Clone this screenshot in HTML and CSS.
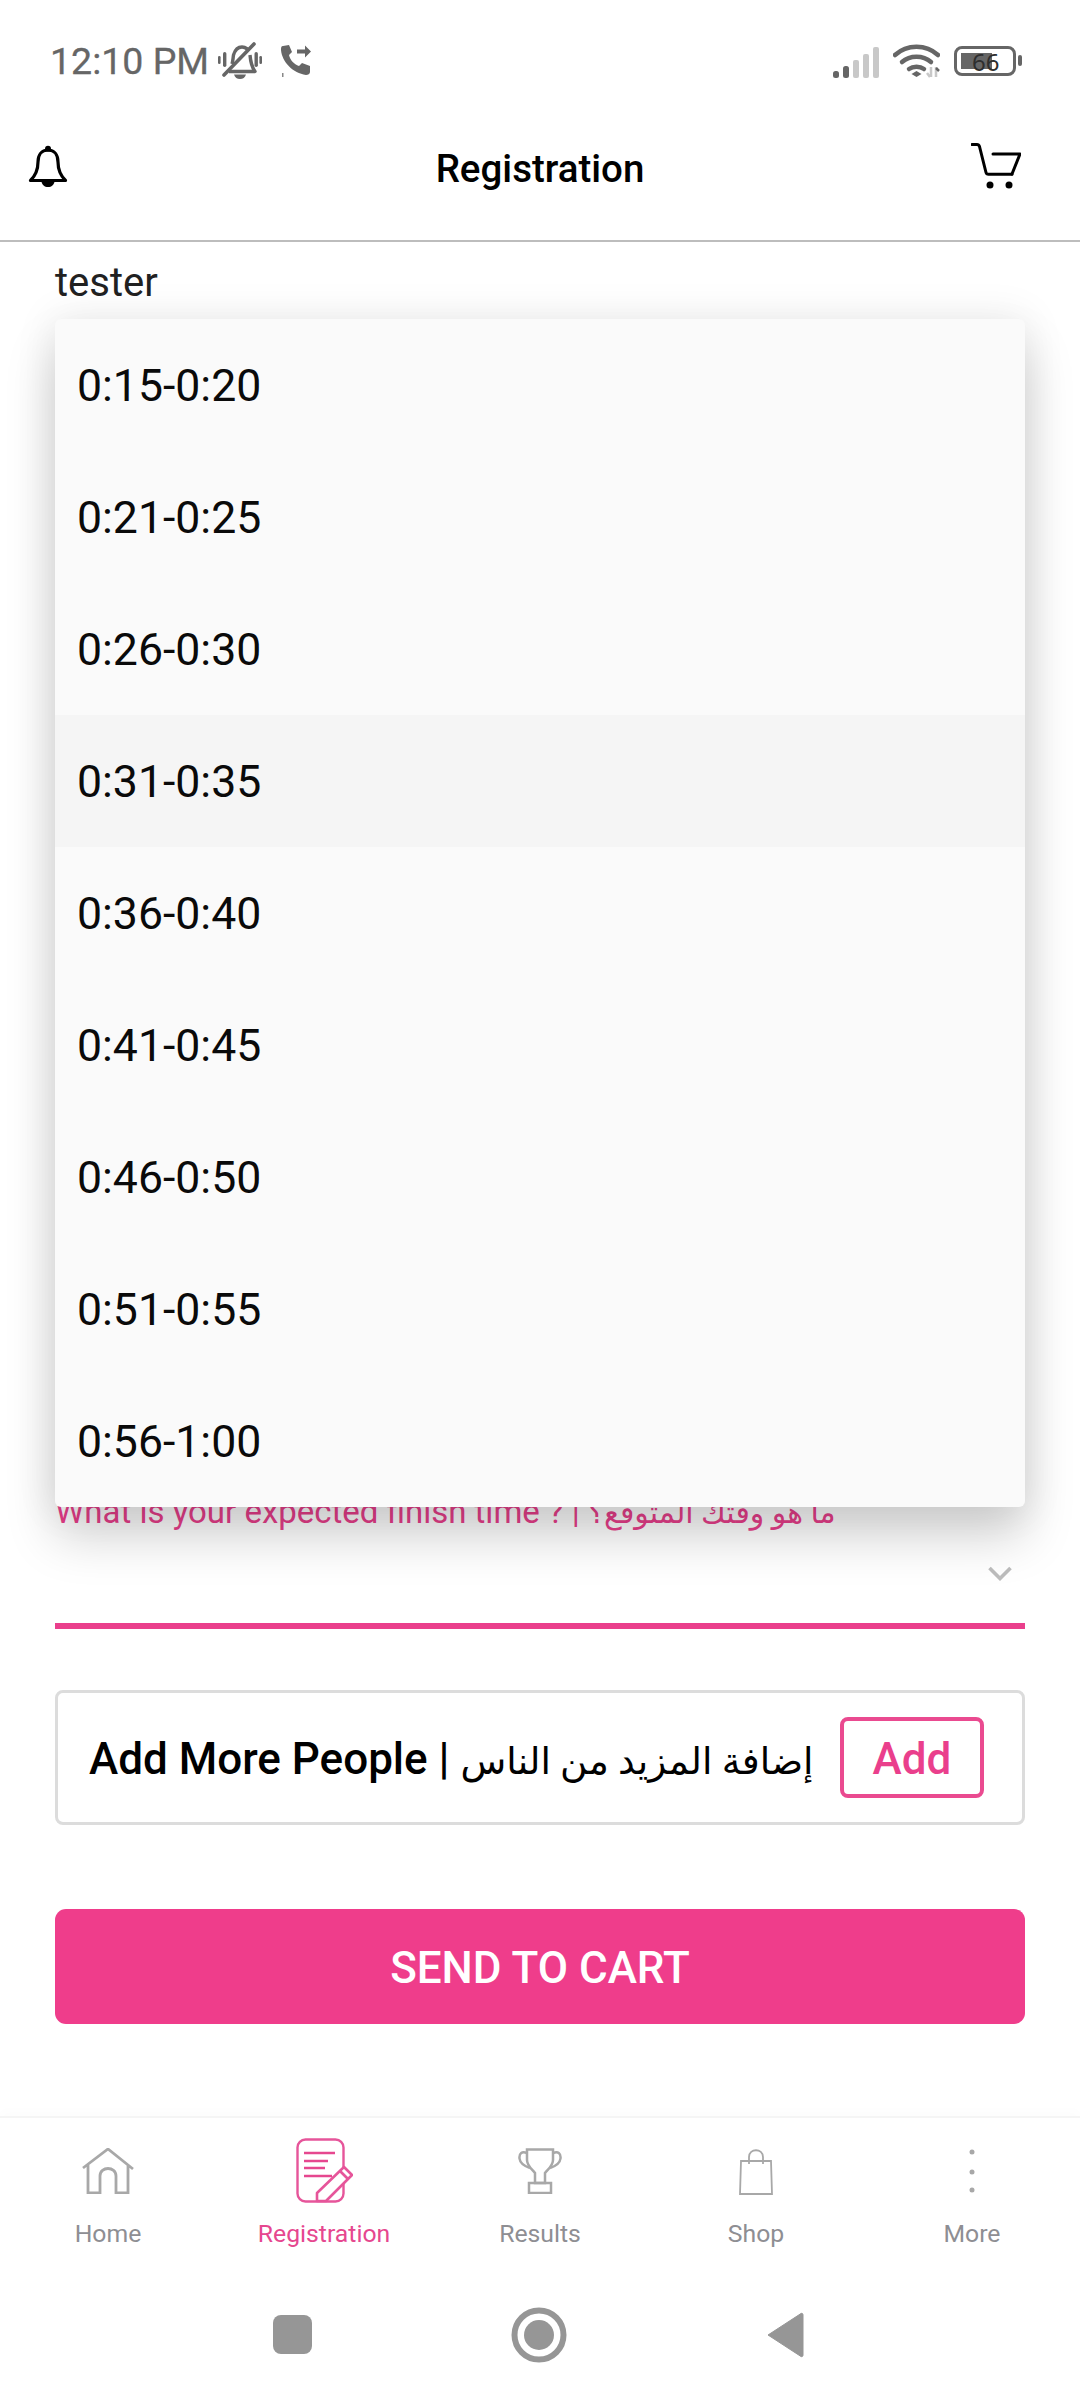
FILE: index.html
```html
<!DOCTYPE html>
<html lang="en">
<head>
<meta charset="utf-8">
<title>Registration</title>
<link rel="stylesheet" href="styles.css">
</head>
<body>
<div class="phone">
  <div class="status">
    <div class="status-left">
      <span class="clock">12:10 PM</span>
      <svg class="ic-mute" viewBox="0 0 44 37"><g fill="none" stroke="#666" stroke-width="3.400" stroke-linejoin="round"><path d="M14 22c1-3 1-6 1.500-9C17 8 20 5 24 5c2 0 4 1 5.500 2"/><path d="M32 13c.5 6 1 11 5 16.500H11"/></g><g fill="#666"><path d="M16 32.500h12c-1 3-3 4.500-6 4.500s-5-1.500-6-4.500z"/><rect x="0" y="14" width="2.600" height="8" rx="1.200"/><rect x="5" y="10" width="3.400" height="15" rx="1.700"/><rect x="36.500" y="10" width="3.400" height="15" rx="1.700"/><rect x="41.400" y="14" width="2.600" height="8" rx="1.200"/></g><path d="M6 33L36 2" stroke="#666" stroke-width="3.600" stroke-linecap="round" fill="none"/></svg>
      <svg class="ic-call" viewBox="0 0 30 32"><path d="M2 1l6-1 3 7-3 3c1 5 5 9 10 11l3-3 8 3v6c0 2-2 3-4 3C12 28 1 17 0 5c0-2 0-4 2-4z" fill="#666"/><path d="M16 8h8V4l6 6-6 6v-4h-8z" transform="translate(0 -3.500)" fill="#666"/><rect x="1" y="28" width="1.500" height="4" fill="#888"/></svg>
    </div>
    <div class="status-right">
      <svg class="ic-signal" viewBox="0 0 46 31"><rect x="0" y="24" width="6" height="7" rx="2.500" fill="#666"/><rect x="10" y="19" width="6" height="12" rx="2.500" fill="#666"/><rect x="20" y="13" width="6" height="18" rx="2" fill="#c8c8c8"/><rect x="30" y="7" width="6" height="24" rx="2" fill="#c8c8c8"/><rect x="40" y="0" width="6" height="31" rx="2" fill="#c8c8c8"/></svg>
      <svg class="ic-wifi" viewBox="0 0 47 35"><g fill="none" stroke="#666" stroke-width="4.500" stroke-linecap="round"><path d="M2 12C14 1 33 1 45 12"/><path d="M9 19c8-7 21-7 29 0"/><path d="M16 26c4-3 11-3 15 0"/></g><path d="M23.500 28l-5 3 5 3 5-3z" fill="#666"/><path d="M38 24v10M34 30l3 4M43 24v10" stroke="#c8c8c8" stroke-width="2.500" fill="none"/><path d="M43 25l3 3" stroke="#666" stroke-width="2.500" fill="none"/></svg>
      <div class="battery">
        <div class="battery-body"><div class="battery-fill"></div><span class="battery-num">66</span></div>
        <div class="battery-nub"></div>
      </div>
    </div>
  </div>

  <header class="appbar">
    <svg class="ic-bell" viewBox="0 0 40 42"><path d="M20 5c-6.500 0-10 5-10 12 0 8-2 13-7.500 18.500h35C32 30 30 25 30 17c0-7-3.500-12-10-12z" fill="none" stroke="#000" stroke-width="3.200" stroke-linejoin="round"/><circle cx="20" cy="3.800" r="3" fill="#000"/><path d="M13.500 36.500h13C26 40 23.500 42 20 42s-6-2-6.500-5.500z" fill="#000"/></svg>
    <h1 class="title">Registration</h1>
    <svg class="ic-cart" viewBox="0 0 50 46"><g fill="none" stroke="#000" stroke-width="3" stroke-linecap="round" stroke-linejoin="round"><path d="M1 1.500h5c1.500 0 2 .5 2.500 2L15 29.500c.3 1.200 1 1.800 2.500 1.800H41"/><path d="M22 11h27l-8 20"/></g><circle cx="19" cy="42" r="3.500"/><circle cx="38" cy="42" r="3.500"/></svg>
  </header>

  <main class="form">
    <div class="name">tester</div>
    <div class="menu-wrap">
      <ul class="menu">
        <li class="menu-item">0:15-0:20</li>
        <li class="menu-item">0:21-0:25</li>
        <li class="menu-item">0:26-0:30</li>
        <li class="menu-item is-active">0:31-0:35</li>
        <li class="menu-item">0:36-0:40</li>
        <li class="menu-item">0:41-0:45</li>
        <li class="menu-item">0:46-0:50</li>
        <li class="menu-item">0:51-0:55</li>
        <li class="menu-item">0:56-1:00</li>
      </ul>
    </div>
    <div class="field">
      <div class="field-label">What is your expected finish time ? | <span class="ar field-ar" dir="rtl">ما هو وقتك المتوقع؟</span></div>
      <svg class="ic-chevron" viewBox="0 0 24 15"><path d="M1.500 2L12 12.500 22.500 2" fill="none" stroke="#bdbdbd" stroke-width="3.600"/></svg>
    </div>
    <div class="add-card">
      <div class="add-text">Add More People | <span class="ar add-ar" dir="rtl">إضافة المزيد من الناس</span></div>
      <button class="add-btn">Add</button>
    </div>
    <button class="send-btn">SEND TO CART</button>
  </main>

  <nav class="tabs">
    <div class="tab">
      <svg class="tab-ic ic-home" viewBox="0 0 52 46"><path d="M1 20L26 1l25 20M6 17v28h12V28c0-10 16-10 16 0v17h12V17" fill="none" stroke="#a8a8a8" stroke-width="2.800"/></svg>
      <span class="tab-label">Home</span>
    </div>
    <div class="tab is-current">
      <svg class="tab-ic ic-doc" viewBox="0 0 57 65"><rect x="1.500" y="1.500" width="46" height="62" rx="8" fill="none" stroke="#e6559a" stroke-width="2.400"/><path d="M8 15h31M8 23h24M8 30h21M8 38h28" stroke="#e6478f" stroke-width="2.600"/><path d="M21 55L48 29l8 8-26 26h-9z" fill="#fff" stroke="#e6559a" stroke-width="2.600" stroke-linejoin="round"/><path d="M44 33l8 8" stroke="#e6559a" stroke-width="2.600"/></svg>
      <span class="tab-label">Registration</span>
    </div>
    <div class="tab">
      <svg class="tab-ic ic-trophy" viewBox="0 0 44 46"><g fill="none" stroke="#a8a8a8" stroke-width="2.500"><path d="M9 1.500H35V12C35 18 30 21 27 25V35H17V25C14 21 9 18 9 12Z"/><path d="M9 5C4 3 1 5 1.500 10.500 2 15 6 18 12 20"/><path d="M35 5c5-2 8 0 7.500 5.500C42 15 38 18 32 20"/><rect x="11" y="35" width="22" height="10"/></g></svg>
      <span class="tab-label">Results</span>
    </div>
    <div class="tab">
      <svg class="tab-ic ic-bag" viewBox="0 0 34 46"><g fill="none" stroke="#a8a8a8" stroke-width="1.800"><path d="M2 12h30l1 33H1z"/><path d="M10 15V8c0-9 14-9 14 0v7"/></g></svg>
      <span class="tab-label">Shop</span>
    </div>
    <div class="tab">
      <svg class="tab-ic ic-more" viewBox="0 0 6 46"><circle cx="3" cy="3" r="2.500" fill="#a8a8a8"/><circle cx="3" cy="23" r="2.500" fill="#a8a8a8"/><circle cx="3" cy="41" r="2.500" fill="#a8a8a8"/></svg>
      <span class="tab-label">More</span>
    </div>
  </nav>

  <div class="sysnav">
    <div class="sys-square"></div>
    <svg class="sys-home" viewBox="0 0 56 56"><circle cx="28" cy="28" r="24.500" fill="none" stroke="#969696" stroke-width="6"/><circle cx="28" cy="28" r="15" fill="#969696"/></svg>
    <svg class="sys-back" viewBox="0 0 38 46"><path d="M2 23L35 1.500c1-.5 2 0 2 1.500v40c0 1.500-1 2-2 1.500z" fill="#969696" stroke="#969696" stroke-linejoin="round"/></svg>
  </div>
</div>
</body>
</html>
```
FILE: styles.css
```css
* { box-sizing: border-box; }
html, body { margin: 0; padding: 0; background: #fff; }
body { font-family: Roboto, "DejaVu Sans", sans-serif; color: #000; }
.phone { width: 1080px; height: 2400px; overflow: hidden; display: flex; flex-direction: column; background: #fff; }

.status { height: 76px; padding: 42px 58px 0 50px; display: flex; justify-content: space-between; align-items: flex-start; }
.status-left, .status-right { display: flex; align-items: center; height: 37px; }
.clock { font-size: 37.500px; color: #666; line-height: 37px; padding-top: 2px; -webkit-text-stroke: .3px #666; }
.ic-mute { width: 44px; height: 37px; margin-left: 9px; }
.ic-call { width: 30px; height: 32px; margin-left: 19px; }
.ic-signal { width: 46px; height: 31px; margin-right: 14px; margin-top: 4px; }
.ic-wifi { width: 47px; height: 35px; margin-right: 14px; }
.battery { display: flex; align-items: center; }
.battery-body { position: relative; width: 62px; height: 30px; border: 3px solid #666; border-radius: 8px; }
.battery-fill { position: absolute; left: 4px; top: 4px; bottom: 4px; width: 31px; background: #666; }
.battery-num { position: absolute; left: 15px; top: 0; font-size: 24px; line-height: 25px; color: #2e2e2e; font-family: "Noto Sans", sans-serif; }
.battery-nub { width: 4px; height: 11px; background: #666; border-radius: 2px; margin-left: 2px; }

.appbar { height: 166px; border-bottom: 2px solid #bdbdbd; display: grid; grid-template-columns: 1fr auto 1fr; align-items: center; padding-top: 16px; }
.ic-bell { width: 40px; height: 42px; margin-left: 28px; }
.ic-cart { width: 50px; height: 46px; justify-self: end; margin-right: 59px; margin-bottom: 1px; }
.title { margin: 0; padding-top: 6px; font-size: 38.500px; font-weight: 500; line-height: 50px; }

.form { flex: 1; padding: 0 55px; display: flex; flex-direction: column; }
.name { height: 77px; padding-top: 16px; font-size: 40px; line-height: 50px; color: #212121; }
.menu-wrap { position: relative; height: 0; z-index: 2; }
.menu { position: absolute; left: 0; right: 0; top: 0; height: 1188px; margin: 0; padding: 0; list-style: none; overflow: hidden; background: #fafafa; border-radius: 6px; box-shadow: 0 30px 50px 0 rgba(0,0,0,.18), 0 0 40px 4px rgba(0,0,0,.07); }
.menu-item { height: 132px; padding: 2px 0 0 22px; font-size: 44.600px; line-height: 130px; color: #0a0a0a; }
.is-active { background: #f5f5f5; }

.field { position: relative; margin-top: 1170px; height: 140px; border-bottom: 6px solid #ea3f8c; flex: none; }
.field-label { font-size: 33px; line-height: 44px; color: #ea3f8c; padding-top: 1px; white-space: nowrap; }
.field-ar { font-size: 30px; }
.ic-chevron { position: absolute; right: 13px; top: 77px; width: 24px; height: 15px; }

.add-card { margin-top: 61px; height: 135px; border: 3px solid #dcdcdc; border-radius: 8px; display: flex; align-items: center; padding: 0 38px 0 31px; justify-content: space-between; flex: none; }
.add-text { padding-top: 2px; font-size: 44px; font-weight: 500; white-space: nowrap; }
.add-ar { font-weight: 400; font-size: 37.500px; }
.add-btn { width: 144px; height: 81px; flex: none; border: 4px solid #ea4a90; border-radius: 8px; background: #fff; color: #ea3f8c; font: 500 44px Roboto, sans-serif; padding: 2px 0 0; }

.send-btn { margin-top: 84px; height: 115px; flex: none; border: 0; border-radius: 11px; background: #ef3d8b; color: #fff; font: 500 44px Roboto, sans-serif; padding: 2px 0 0; }

.tabs { height: 199px; display: grid; grid-template-columns: repeat(5, 1fr); border-top: 2px solid #f5f5f5; box-shadow: 0 -6px 10px rgba(0,0,0,.012); }
.tab { display: flex; flex-direction: column; align-items: center; position: relative; height: 170px; padding-top: 22px; }
.tab-ic { flex: none; }
.tab-label { position: absolute; top: 100px; font-size: 24.750px; line-height: 32px; color: #8e8e93; }
.is-current .tab-label { color: #e6478f; }
.ic-home { width: 52px; height: 46px; margin-top: 8px; }
.ic-doc { width: 57px; height: 65px; margin-top: -2px; }
.ic-trophy { width: 44px; height: 46px; margin-top: 8px; }
.ic-bag { width: 34px; height: 46px; margin-top: 9px; }
.ic-more { width: 6px; height: 46px; margin-top: 9px; }

.sysnav { height: 85px; display: grid; grid-template-columns: 39px 56px 38px; justify-content: space-between; align-items: start; padding: 0 276px 0 273px; }
.sys-square { width: 39px; height: 39px; background: #969696; border-radius: 8px; }
.sys-home { width: 56px; height: 56px; margin-top: -8px; }
.sys-back { width: 38px; height: 46px; margin-top: -3px; }
```
